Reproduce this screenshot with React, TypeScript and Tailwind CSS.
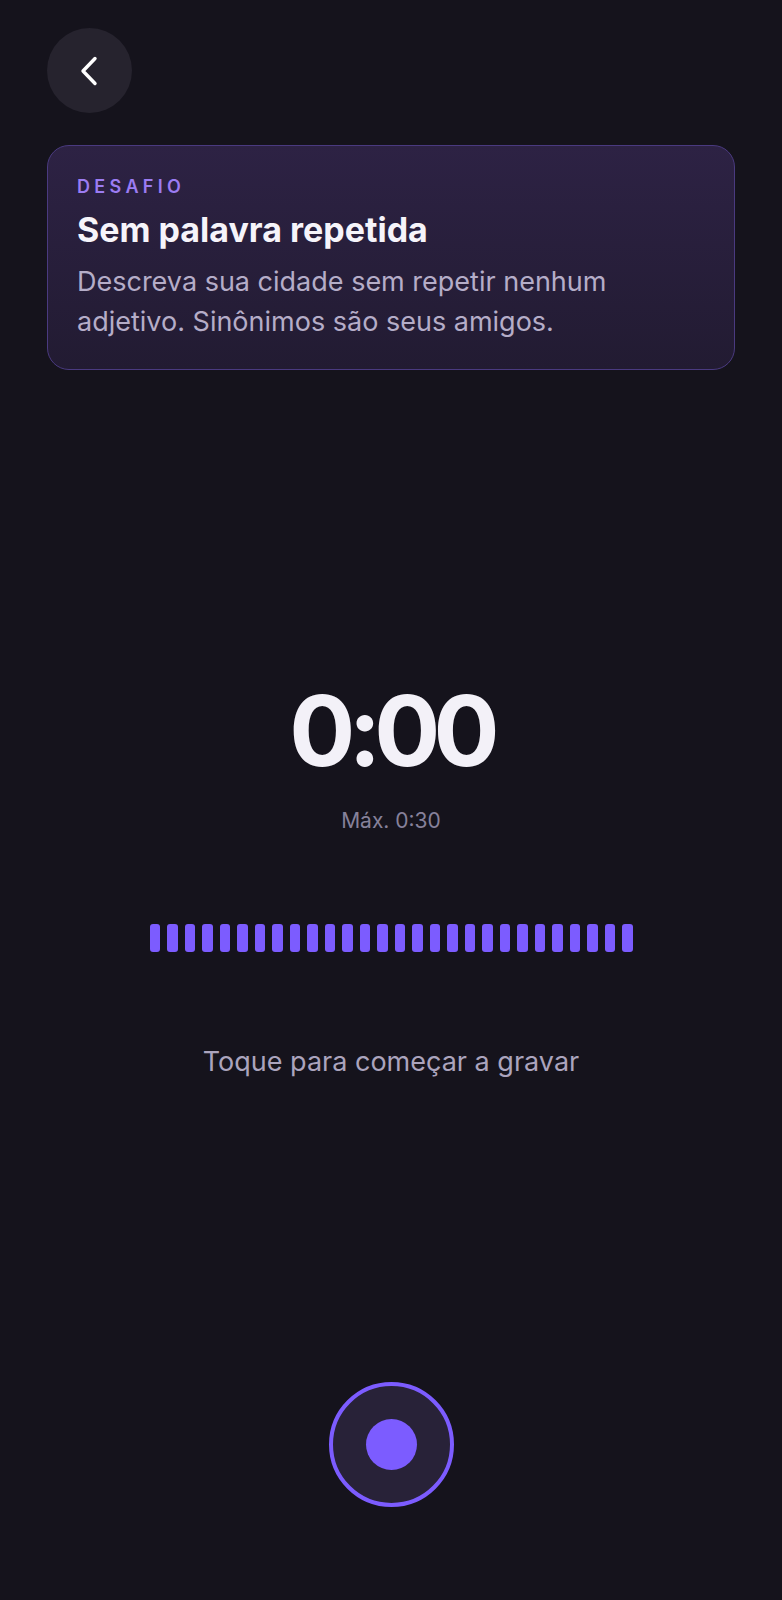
import React from "react";

export default function App() {
  const bars = Array.from({ length: 28 });
  return (
    <div
      className="min-h-[1600px] w-full bg-[#15131c] px-[47px] flex flex-col"
      style={{ fontFamily: "Inter, 'Noto Sans', sans-serif" }}
    >
      <button className="mt-[28px] flex h-[85px] w-[85px] items-center justify-center rounded-full bg-[#26232e]">
        <svg width="20" height="30" viewBox="0 0 20 30" fill="none">
          <polyline
            points="15,2.5 3,15 15,27.5"
            stroke="#ffffff"
            strokeWidth="3.4"
            strokeLinecap="round"
            strokeLinejoin="round"
          />
        </svg>
      </button>

      <div className="mt-[32px] rounded-[22px] border border-[#4a3a80] bg-gradient-to-b from-[#2d2244] to-[#221b32] px-[29px] pt-[29px] pb-[27px]">
        <div className="text-[18px] leading-[24px] font-semibold tracking-[0.24em] text-[#9b7cf2]">
          DESAFIO
        </div>
        <div className="mt-[11px] text-[34px] leading-[40px] font-bold text-[#f6f4fa]">
          Sem palavra repetida
        </div>
        <div className="mt-[12px] text-[27px] leading-[40px] text-[#b5adc8]">
          Descreva sua cidade sem repetir nenhum adjetivo. Sinônimos são seus amigos.
        </div>
      </div>

      <div className="mt-[312px] flex flex-col items-center">
        <div className="text-[98px] leading-none font-bold tracking-[-0.07em] text-[#f3f1f8]">
          0:00
        </div>
        <div className="mt-[27px] text-[21px] leading-[28px] text-[#86819a]">Máx. 0:30</div>

        <div className="mt-[89px] flex gap-[7px]">
          {bars.map((_, i) => (
            <div key={i} className="h-[28px] w-[10.5px] rounded-[3px] bg-[#7c5cff]" />
          ))}
        </div>

        <div className="mt-[92px] text-[27px] leading-[36px] text-[#aba4bd]">
          Toque para começar a gravar
        </div>

        <button className="mt-[302px] flex h-[125px] w-[125px] items-center justify-center rounded-full border-[4px] border-[#7c5cff] bg-[#282238]">
          <div className="h-[51px] w-[51px] rounded-full bg-[#7c5cff]" />
        </button>
      </div>
    </div>
  );
}
